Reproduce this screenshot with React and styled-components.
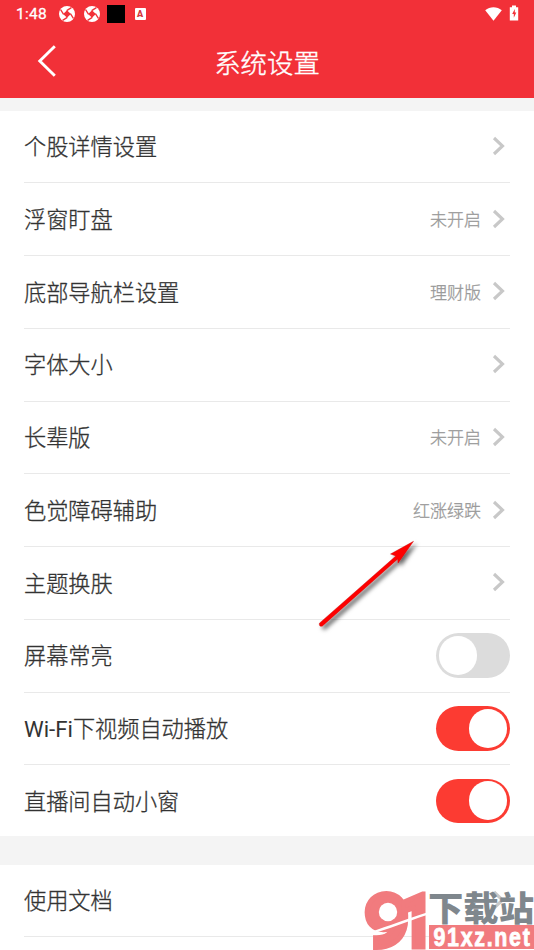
import React from "react"
import styled, { createGlobalStyle, css } from "styled-components"

const GlobalStyle = createGlobalStyle`
  * {
    box-sizing: border-box;
  }
  body {
    margin: 0;
    background: #f4f4f4;
    font-family: Roboto, "Noto Sans CJK SC", sans-serif;
    overflow: hidden;
  }
`

const Screen = styled.div`
  position: relative;
  width: 534px;
  height: 950px;
  overflow: hidden;
  background: #f4f4f4;
`

const Header = styled.header`
  height: 98px;
  background: #f23038;
  color: white;
`

const StatusBar = styled.div`
  height: 28px;
  padding: 0 15px 0 16px;
  display: flex;
  align-items: center;
  justify-content: space-between;
`

const StatusGroup = styled.div`
  display: flex;
  align-items: center;
`

const Clock = styled.span`
  width: 43px;
  font-size: 15.5px;
  line-height: 28px;
  letter-spacing: 0.3px;
  -webkit-text-stroke: 0.3px white;
`

const BlackSquare = styled.span`
  width: 18px;
  height: 18px;
  margin: 0 10px 0 7px;
  background: black;
`

const LetterBadge = styled.span`
  width: 11px;
  height: 12px;
  border-radius: 1px;
  background: white;
  color: #d5353b;
  font-size: 9px;
  font-weight: 900;
  line-height: 12px;
  text-align: center;
`

const BatteryIcon = styled.svg`
  margin: -2px 0 0 7px;
`

const TitleBar = styled.div`
  height: 70px;
  padding: 0 36px;
  display: grid;
  grid-template-columns: 60px 1fr 60px;
  align-items: center;
`

const Title = styled.h1`
  margin: 0;
  padding-top: 2px;
  font-size: 26.4px;
  font-weight: 300;
  line-height: 68px;
  text-align: center;
  -webkit-text-stroke: 0.4px white;
`

const BackButton = styled.button`
  padding: 0;
  border: 0;
  background: none;
  color: white;
  display: flex;
  svg {
    margin-top: -4px;
  }
`

const Section = styled.section`
  margin-top: ${props => props.$gap}px;
  padding: 0 24px;
  background: white;
`

const Row = styled.div`
  height: 72.76px;
  display: flex;
  align-items: center;
  border-bottom: 1.5px solid #e9e9e9;

  ${props => props.$last && css`
    height: 71px;
    border-bottom: 0;
  `}
`

const Label = styled.span`
  flex-grow: 1;
  padding-top: 1.4px;
  color: #333;
  font-size: 22.2px;
  font-weight: 300;
  line-height: 32px;
  -webkit-text-stroke: 0.3px #333;
`

const Latin = styled.span`
  font-weight: 400;
  -webkit-text-stroke: 0;
`

const Value = styled.span`
  padding-top: 1.2px;
  color: #999;
  font-size: 17px;
  font-weight: 300;
  line-height: 26px;
  -webkit-text-stroke: 0.3px #999;
`

const Chevron = styled.svg`
  width: 14px;
  height: 20px;
  margin: 0 4px 1px 11px;
`

const Toggle = styled.button`
  width: 74px;
  height: 44.6px;
  padding: 0 2.6px;
  border: 0;
  border-radius: 23px;
  display: flex;
  align-items: center;
  justify-content: ${props => props.$on ? "flex-end" : "flex-start"};
  background: ${props => props.$on ? "#fc3b32" : "#dcdcdc"};
`

const Knob = styled.span`
  width: 38.8px;
  height: 38.8px;
  border-radius: 50%;
  background: white;
`

const Pointer = styled.svg`
  position: absolute;
  left: 310px;
  top: 532px;
`

const Watermark = styled.div`
  position: absolute;
  left: 362px;
  top: 886px;
  width: 172px;
  height: 64px;
`

const ApertureIcon = styled.svg`
  width: 16px;
  height: 16px;
  margin-right: 8.5px;
  &:last-of-type {
    margin-right: 0;
  }
`

const Aperture = () => (
  <ApertureIcon viewBox="0 0 16 16">
    <circle cx="8" cy="8" r="8" fill="#fff" />
    <path d="M8 4.2 11.8 8 8 11.8 4.2 8Z" fill="#f23038" />
    <g stroke="#f23038" strokeWidth="1.3" fill="none">
      <path d="M4.6 8.3 1.6 3.6" />
      <path d="M7.7 4.6 12.4 1.6" />
      <path d="M11.4 7.7 14.4 12.4" />
      <path d="M8.3 11.4 3.6 14.4" />
    </g>
  </ApertureIcon>
)

const settings = [
  { label: "个股详情设置" },
  { label: "浮窗盯盘", value: "未开启" },
  { label: "底部导航栏设置", value: "理财版" },
  { label: "字体大小" },
  { label: "长辈版", value: "未开启" },
  { label: "色觉障碍辅助", value: "红涨绿跌" },
  { label: "主题换肤" },
  { label: "屏幕常亮", toggle: true, on: false },
  { latin: "Wi-Fi", label: "下视频自动播放", toggle: true, on: true },
  { label: "直播间自动小窗", toggle: true, on: true },
]

const SettingRow = ({ latin, label, value, toggle, on, last }) => (
  <Row $last={last}>
    <Label>{latin && <Latin>{latin}</Latin>}{label}</Label>
    {value && <Value>{value}</Value>}
    {toggle
      ? <Toggle $on={on}><Knob /></Toggle>
      : (
        <Chevron viewBox="0 0 14 20">
          <path d="M2 2 10.5 10 2 18" fill="none" stroke="#c8c8c8" strokeWidth="3.1" />
        </Chevron>
      )}
  </Row>
)

const App = () => (
  <>
    <GlobalStyle />
    <Screen>
      <Header>
        <StatusBar>
          <StatusGroup>
            <Clock>1:48</Clock>
            <Aperture />
            <Aperture />
            <BlackSquare />
            <LetterBadge>A</LetterBadge>
          </StatusGroup>
          <StatusGroup>
            <svg width="17" height="15" viewBox="0 0 17 15">
              <path d="M0.2 3.2C5 -0.8 12 -0.8 16.8 3.2L8.5 13.8Z" fill="#fff" />
            </svg>
            <BatteryIcon width="10" height="16" viewBox="0 0 10 16">
              <path d="M3 0.5h4v1.7h2.2v13.3H0.8V2.2H3Z" fill="#fff" />
              <path d="M5.8 4 3.2 9h1.6v3.7L7.3 7.6H5.8Z" fill="#f23038" />
            </BatteryIcon>
          </StatusGroup>
        </StatusBar>
        <TitleBar>
          <BackButton>
            <svg width="22" height="34" viewBox="0 0 22 34">
              <path d="M18.8 2.3 3.8 17 18.8 31.7" fill="none" stroke="#fff" strokeWidth="2.9" />
            </svg>
          </BackButton>
          <Title>系统设置</Title>
        </TitleBar>
      </Header>
      <Section $gap={12.6}>
        {settings.map((item, i) => (
          <SettingRow key={item.label} {...item} last={i === settings.length - 1} />
        ))}
      </Section>
      <Section $gap={28.3}>
        <SettingRow label="使用文档" />
        <Row />
      </Section>

      <Pointer width="120" height="104" viewBox="0 0 120 104">
        <defs>
          <filter id="shadow" x="-20%" y="-20%" width="150%" height="150%">
            <feDropShadow dx="3" dy="3" stdDeviation="2" floodColor="#000" floodOpacity="0.6" />
          </filter>
        </defs>
        <path
          d="M103.5 9.3 80.5 22 85.8 24 9.4 91.2Q8.8 94.8 12.2 94.2L87.8 27 88 31.2Z"
          fill="#fe0000"
          stroke="#c00808"
          strokeWidth="0.4"
          filter="url(#shadow)"
        />
      </Pointer>

      <Watermark>
        <svg width="172" height="64" viewBox="0 0 172 64">
          <g fill="#f17b7e" stroke="#f17b7e" fontFamily="Roboto, sans-serif" fontWeight="900" strokeWidth="5">
            <text fontSize="73.5" transform="translate(2.2 60.5) scale(1.05 1)">9</text>
            <text fontSize="75" transform="translate(37 61) scale(0.8 1)">1</text>
          </g>
          <circle cx="26" cy="26" r="9.2" fill="#fff" />
          <path d="M8 46C27 40 44 33 65 26.5L65 29C44 36 27 43 8 48.5Z" fill="#fff" />
          <rect x="67" y="39" width="105" height="24" fill="#f17b7e" />
          <text x="66" y="34.5" fontSize="34" fontWeight="900" fill="#7f878d" fontFamily="Noto Sans CJK SC, sans-serif" textLength="106" lengthAdjust="spacingAndGlyphs">下载站</text>
          <text x="71.5" y="60" fontSize="25" fontWeight="700" fill="#fff" stroke="#fff" strokeWidth="0.8" fontFamily="Liberation Sans, sans-serif" letterSpacing="2" textLength="98" lengthAdjust="spacingAndGlyphs">91xz.net</text>
        </svg>
      </Watermark>
    </Screen>
  </>
)

export default App
